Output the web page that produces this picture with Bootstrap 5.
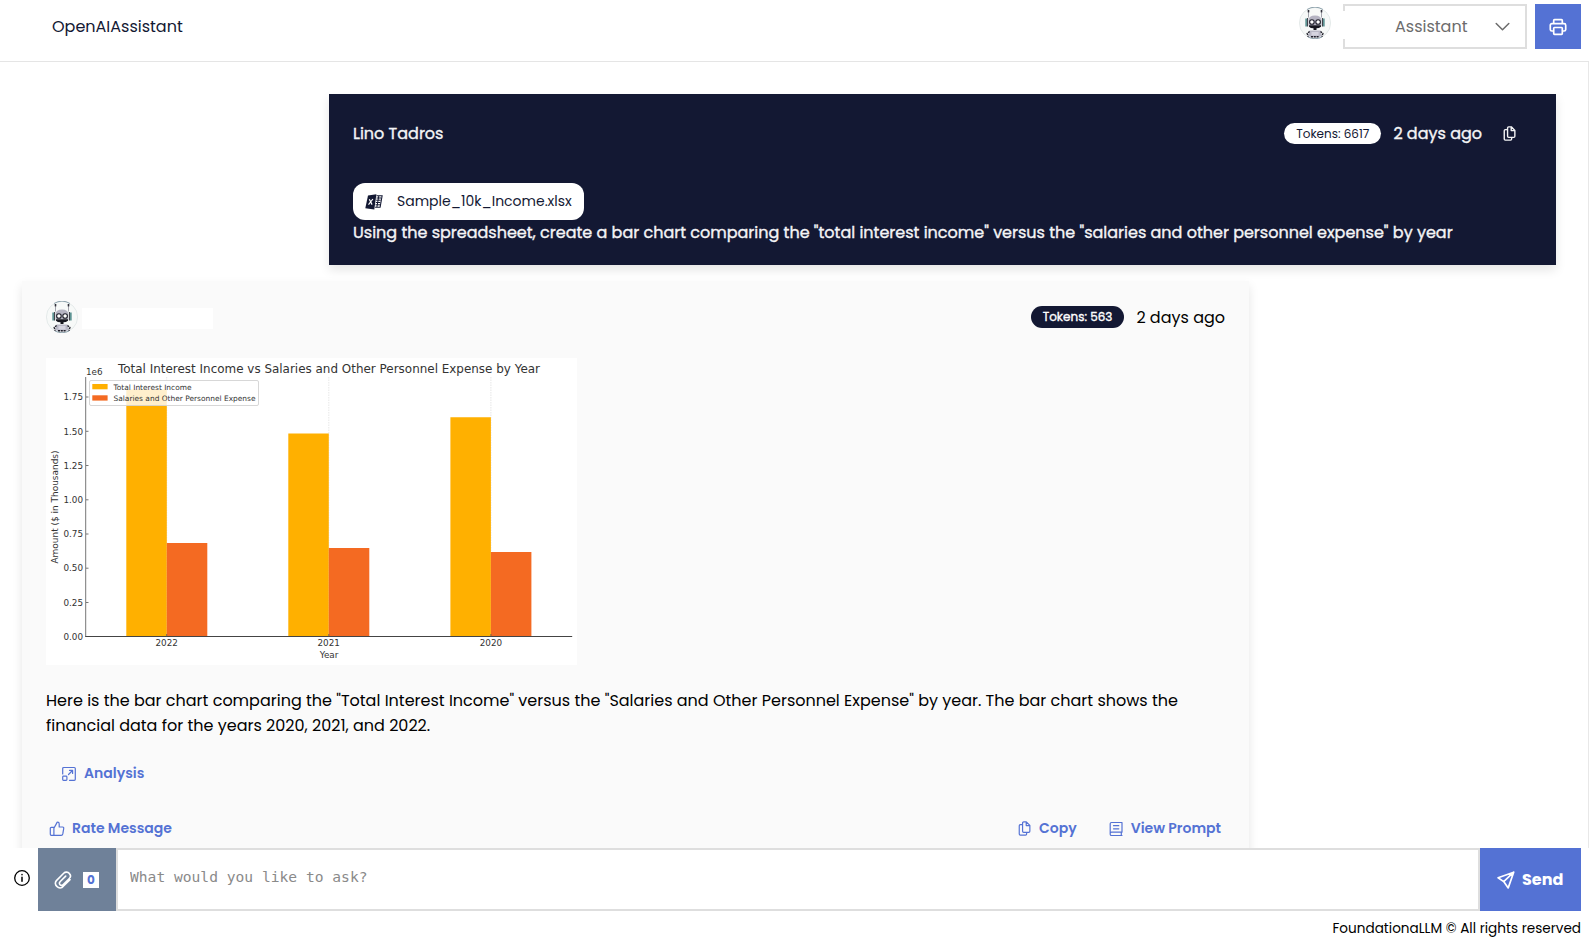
<!DOCTYPE html>
<html lang="en">
<head>
<meta charset="utf-8">
<meta name="viewport" content="width=device-width, initial-scale=1">
<title>OpenAIAssistant</title>
<link href="https://cdn.jsdelivr.net/npm/bootstrap@5.3.0/dist/css/bootstrap.min.css" rel="stylesheet">
<style>
  :root { --navy: #131833; --accent: #5472d4; --slate: #6f8199; --line: #dedede; }
  body { font-family: Poppins, Inter, "Open Sans", sans-serif; font-size: 16px; color: #000; height: 944px; line-height: 25px; }
  svg { display: block; flex: none; }
  .ico { fill: none; stroke: currentColor; stroke-linecap: round; stroke-linejoin: round; }
  .top-bar { height: 62px; border-bottom: 1px solid #e5e5e5; padding: 4px 8px 0 52px; }
  .top-title { color: var(--navy); padding-top: 10px; }
  .top-avatar { margin-top: 3px; }
  .picker { width: 184px; height: 45px; border: 2px solid var(--line); color: #6c6c6c; padding: 0 15px 1px 50px; margin-left: 12px; position: relative; }
  .picker::before { content: ""; position: absolute; left: -2px; top: 5px; width: 2px; height: 28px; background: #fff; }
  .print-btn { width: 46px; height: 45px; margin-left: 8px; background: var(--accent); color: #fff; border: 0; padding: 0; }
  .thread { height: 786px; overflow: hidden; border-right: 1px solid #e8e8e8; padding: 32px 32px 0 22px; }
  .message { width: 1227px; padding: 24px; box-shadow: 0 5px 10px rgba(0,0,0,.1); }
  .message-user { background: var(--navy); color: #f4f4f6; height: 171px; padding-top: 25px; }
  .on-dark { -webkit-text-stroke: .35px currentColor; }
  .message-bot { background: #fafafa; margin-top: 16px; padding-top: 20px; height: 640px; }
  .token-pill { border-radius: 11px; font-size: 12px; line-height: 21px; height: 21px; padding: 0 12px; margin-right: 12px; }
  .file-pill { width: 231px; height: 37px; border-radius: 12px; background: #fff; color: var(--navy); font-size: 14px; padding: 0 12px; margin-top: 36px; }
  .blank-name { width: 131px; height: 21px; background: #fff; margin: 2px 0 0 4px; }
  .plot { margin-top: 25px; background: #fff; }
  .plot text { font-family: "DejaVu Sans", sans-serif; fill: #333; }
  .link-btn { color: var(--accent); font-size: 14px; font-weight: 600; line-height: 20px; background: none; border: 0; padding: 0; }
  .ask-bar { height: 63px; padding: 0 8px 0 14px; }
  .attach { width: 78px; background: var(--slate); color: #fff; margin-left: 8px; padding-left: 16px; padding-top: 1px; border: 0; }
  .count { width: 16px; height: 16px; margin-left: 11px; background: #fff; color: var(--accent); font-size: 12px; font-weight: 700; line-height: 16px; }
  .ask-input { border: 2px solid var(--line); border-radius: 0; padding: 0 12px 7px; font-family: "DejaVu Sans Mono", monospace; font-size: 14.62px; color: #888; }
  .ask-input::placeholder { color: #8a8a8a; opacity: 1; }
  .send { width: 101px; background: var(--accent); color: #fff; font-weight: 700; border: 0; padding: 0 0 0 17px; }
  .foot { font-size: 13.6px; line-height: 20px; padding: 8px 8px 0 0; }
</style>
</head>
<body class="d-flex flex-column overflow-hidden bg-white">

<svg width="0" height="0" class="position-absolute" aria-hidden="true">
  <defs>
    <symbol id="robot" viewBox="0 0 32 32">
      <circle cx="16" cy="16" r="15.6" fill="#f7f9f8" stroke="#dfe6e6" stroke-width=".8"/>
      <path d="M8 2.5a15.6 15.6 0 0 1 16 0M9 30a15.6 15.6 0 0 0 14 0" fill="none" stroke="#8fa3ad" stroke-width="1"/>
      <path d="M9.500 4v6.500M22.500 4v6.500" stroke="#8d8d98" stroke-width=".8"/>
      <rect x="8.700" y="3" width="1.600" height="2.400" fill="#30303a"/><rect x="21.700" y="3" width="1.600" height="2.400" fill="#30303a"/>
      <rect x="6.300" y="11.500" width="1.800" height="8" fill="#5e9594"/><rect x="23.900" y="11.500" width="1.800" height="8" fill="#5e9594"/>
      <rect x="8.100" y="11" width="1" height="8.500" fill="#32323c"/><rect x="22.900" y="11" width="1" height="8.500" fill="#32323c"/>
      <path d="M9.700 13q0-4.500 6.300-4.500T22.300 13v5.500H9.700z" fill="#b5b3c2"/>
      <path d="M10 18.300h12v1.400q-2 1.600-4.500 1.600V23h-3v-1.700q-3 0-4.500-1.600z" fill="#17171f"/>
      <circle cx="12.900" cy="15" r="2.300" fill="#fff" stroke="#20202a" stroke-width="1.100"/>
      <circle cx="19.100" cy="15" r="2.300" fill="#fff" stroke="#20202a" stroke-width="1.100"/>
      <path d="M10.500 23.500h11l1.500 5.500q-7 3-14 0z" fill="#b9b8c6"/>
      <rect x="12.500" y="25" width="7" height="3.500" fill="#d5d4df"/>
      <path d="M10.600 24.500l-2.400 2 1 3.200M21.500 24.500l2.400 2-1 3.200M12 29.700h8" fill="none" stroke="#20202a" stroke-width="1.400" stroke-dasharray="2 .8"/>
    </symbol>
    <symbol id="copy" viewBox="0 0 14 14">
      <path d="M6.200.8h2.500l3.300 3.300v5.500a1 1 0 0 1-1 1H6.200a1 1 0 0 1-1-1V1.800a1 1 0 0 1 1-1zM8.600 1v3.300h3.200M4.800 3.400H3.100a1 1 0 0 0-1 1v7.800a1 1 0 0 0 1 1h4.900a1 1 0 0 0 1-1v-1.400"/>
    </symbol>
  </defs>
</svg>

<header class="top-bar d-flex">
  <div class="top-title me-auto">OpenAIAssistant</div>
  <svg width="32" height="32" class="top-avatar"><use href="#robot"/></svg>
  <div class="picker d-flex align-items-center justify-content-between">
    <span>Assistant</span>
    <svg class="ico" width="15" height="15" viewBox="0 0 15 15" stroke-width="1.500"><path d="M1.200 4.500l6.300 6.300 6.300-6.300"/></svg>
  </div>
  <button class="print-btn d-flex align-items-center justify-content-center" aria-label="Print">
    <svg class="ico" width="18" height="18" viewBox="0 0 18 18" stroke-width="1.700"><path d="M4.700 5.600V2.500q0-.8.800-.8h7q.8 0 .8.800v3.100M4.700 13H2.900A1.600 1.600 0 0 1 1.300 11.400V7.200a1.600 1.600 0 0 1 1.600-1.600h12.200a1.600 1.600 0 0 1 1.600 1.600v4.200A1.600 1.600 0 0 1 15.100 13h-1.800M5.500 9.500h7q.8 0 .8.800v5.200q0 .8-.8.800h-7q-.8 0-.8-.8v-5.200q0-.8.800-.8z"/></svg>
  </button>
</header>

<main class="thread">
  <section class="message message-user ms-auto">
    <div class="d-flex align-items-center" style="height:28px">
      <span class="on-dark me-auto">Lino Tadros</span>
      <span class="token-pill bg-white" style="color:var(--navy)">Tokens: 6617</span>
      <span class="on-dark">2 days ago</span>
      <svg class="ico" width="15" height="15" stroke-width="1.300" style="margin:1px 15px 0 20px"><use href="#copy"/></svg>
    </div>
    <div class="file-pill d-flex align-items-center">
      <svg width="18" height="16" viewBox="0 0 18 16"><path d="M3 1.600L11.400.2 9.300 15.600.3 14.300z" fill="#131833"/><path d="M11.500 1.800h5.600l-2 11.500h-5" fill="none" stroke="#131833" stroke-width="1.100"/><path d="M11.500 4h4.500M11.200 6.200h4.500M10.900 8.500h4.400M10.500 10.800H15M13.800 2l-1.900 11" stroke="#131833" stroke-width="1"/><path d="M4.300 5.200l2.800 5.400M7.900 5L3.500 10.600" stroke="#fff" stroke-width="1.200"/></svg>
      <span style="margin-left:14px">Sample_10k_Income.xlsx</span>
    </div>
    <div class="on-dark">Using the spreadsheet, create a bar chart comparing the "total interest income" versus the "salaries and other personnel expense" by year</div>
  </section>

  <section class="message message-bot">
    <div class="d-flex align-items-center" style="height:32px">
      <svg width="32" height="32"><use href="#robot"/></svg>
      <div class="blank-name me-auto"></div>
      <span class="token-pill on-dark text-white" style="background:var(--navy);height:22px">Tokens: 563</span>
      <span>2 days ago</span>
    </div>

    <svg class="plot" width="531" height="307" viewBox="46 358 531 307">
      <g stroke="#ddd" stroke-width=".7" stroke-dasharray="1.500 1"><path d="M166.700 377v259M328.800 377v259M490.900 377v259"/></g>
      <g fill="#ffb000"><path d="M126.300 389.600h40.500v247h-40.500zM288.300 433.500h40.500v203h-40.500zM450.400 417.300h40.500v219h-40.500z"/></g>
      <g fill="#f46a22"><path d="M166.800 543h40.500v93.500h-40.500zM328.800 548h40.500v88.500h-40.500zM490.900 552h40.500v84.500h-40.500z"/></g>
      <path d="M85.700 377v259.500" stroke="#777" fill="none"/>
      <path d="M85.200 636.500h487" stroke="#444" fill="none"/>
      <path d="M86 397h2.500M86 431.300h2.500M86 465.500h2.500M86 499.800h2.500M86 534h2.500M86 568.200h2.500M86 602.500h2.500M166.700 634v2.500M328.800 634v2.500M490.900 634v2.500" stroke="#555" stroke-width=".8"/>
      <rect x="89.500" y="380.500" width="169" height="25" rx="1.500" fill="#fff" fill-opacity=".8" stroke="#d2d2d2" stroke-width=".9"/>
      <rect x="92.300" y="384" width="15.300" height="5.300" fill="#ffb000"/><rect x="92.300" y="395.300" width="15.300" height="5.300" fill="#f46a22"/>
      <text x="118" y="373" font-size="12.400" textLength="422" lengthAdjust="spacingAndGlyphs">Total Interest Income vs Salaries and Other Personnel Expense by Year</text>
      <g font-size="8.800">
        <text x="86" y="374.500" textLength="16.500">1e6</text>
        <g text-anchor="end"><text x="83" y="400.200">1.75</text><text x="83" y="434.500">1.50</text><text x="83" y="468.700">1.25</text><text x="83" y="503">1.00</text><text x="83" y="537.200">0.75</text><text x="83" y="571.400">0.50</text><text x="83" y="605.700">0.25</text><text x="83" y="639.900">0.00</text></g>
        <g text-anchor="middle"><text x="166.700" y="646.300">2022</text><text x="328.700" y="646.300">2021</text><text x="490.900" y="646.300">2020</text><text x="329" y="658.300">Year</text></g>
        <text transform="translate(58 563.500) rotate(-90)" font-size="9.100" textLength="113" lengthAdjust="spacingAndGlyphs">Amount ($ in Thousands)</text>
      </g>
      <g font-size="7.400"><text x="113.500" y="389.500" textLength="78" lengthAdjust="spacingAndGlyphs">Total Interest Income</text><text x="113.500" y="400.800" textLength="142" lengthAdjust="spacingAndGlyphs">Salaries and Other Personnel Expense</text></g>
    </svg>

    <div style="margin-top:23px">Here is the bar chart comparing the "Total Interest Income" versus the "Salaries and Other Personnel Expense" by year. The bar chart shows the<br>financial data for the years 2020, 2021, and 2022.</div>

    <button class="link-btn d-flex align-items-center" style="margin:25px 0 0 15px">
      <svg class="ico" width="16" height="16" viewBox="0 0 16 16" stroke-width="1.200" style="margin-top:1px"><path d="M1.700 8V2.500a1 1 0 0 1 1-1h10.600a1 1 0 0 1 1 1v10.800a1 1 0 0 1-1 1H8.500M2.500 10.200h2.600q.8 0 .8.800v2.500q0 .8-.8.800H2.500q-.8 0-.8-.8V11q0-.8.800-.8zM7.500 8.500l4-4M8.500 4.400h3.100v3.100"/></svg>
      <span style="margin-left:7px">Analysis</span>
    </button>

    <div class="d-flex align-items-center" style="margin-top:35px">
      <button class="link-btn d-flex align-items-center me-auto" style="margin-left:3px">
        <svg class="ico" width="16" height="16" viewBox="0 0 16 16" stroke-width="1.200" style="margin-top:1px"><path d="M4.900 7.200L7.700 2.100Q8 1.200 8.700 1.200q1.500 0 1.500 1.800v3h3.300q1.500.1 1.200 1.600l-.9 5.300q-.3 1.400-1.600 1.400H4.900zM4.900 6.300H2.300q-1 0-1 1v6q0 1 1 1h2.600"/></svg>
        <span style="margin-left:7px">Rate Message</span>
      </button>
      <button class="link-btn d-flex align-items-center">
        <svg class="ico" width="15" height="15" stroke-width="1.100" style="margin-top:1px"><use href="#copy"/></svg>
        <span style="margin-left:7px">Copy</span>
      </button>
      <button class="link-btn d-flex align-items-center" style="margin:0 4px 0 31px">
        <svg class="ico" width="16" height="16" viewBox="0 0 16 16" stroke-width="1.200" style="margin-top:1px"><path d="M14 11V1.500H3.500q-1.300 0-1.300 1.300v10.400q0 1.300 1.300 1.300H14M14 11.200H3.500q-1.300 0-1.300 1.300M13.300 11.300v3M5.500 4.700h5.300M5.500 7.800h5.300"/></svg>
        <span style="margin-left:7px">View Prompt</span>
      </button>
    </div>
  </section>
</main>

<div class="ask-bar d-flex align-items-stretch">
  <svg class="ico align-self-center" width="16" height="18" viewBox="0 0 16 18" stroke-width="1.300" style="margin-top:-3px"><circle cx="8" cy="9" r="7.300"/><path d="M8 8.300v4M8 5.600v.2" stroke-width="1.500"/></svg>
  <button class="attach d-flex align-items-center" aria-label="Attach file">
    <svg class="ico" width="18" height="18" viewBox="0 0 18 18" stroke-width="1.600"><path d="M16 8.600L9.300 15.300a4 4 0 0 1-6.300.2 4 4 0 0 1-.6-5.900L9.700 2.300a3.800 3.800 0 0 1 5.700.3 3.500 3.500 0 0 1-.1 4.900L9 13.700a2 2 0 0 1-3 0 2 2 0 0 1 0-2.900l5.700-5.700"/></svg>
    <span class="count text-center">0</span>
  </button>
  <input class="ask-input flex-grow-1" type="text" placeholder="What would you like to ask?" aria-label="Question">
  <button class="send d-flex align-items-center">
    <svg class="ico" width="18" height="18" viewBox="0 0 18 18" stroke-width="1.700"><path d="M16.700 1.200L1.100 6.800l5.600 3.800 4.500 6.300zM16.700 1.200l-10 9.400"/></svg>
    <span style="margin-left:7px">Send</span>
  </button>
</div>
<footer class="foot text-end">FoundationaLLM © All rights reserved</footer>

<script src="https://cdn.jsdelivr.net/npm/bootstrap@5.3.0/dist/js/bootstrap.bundle.min.js"></script>
</body>
</html>
